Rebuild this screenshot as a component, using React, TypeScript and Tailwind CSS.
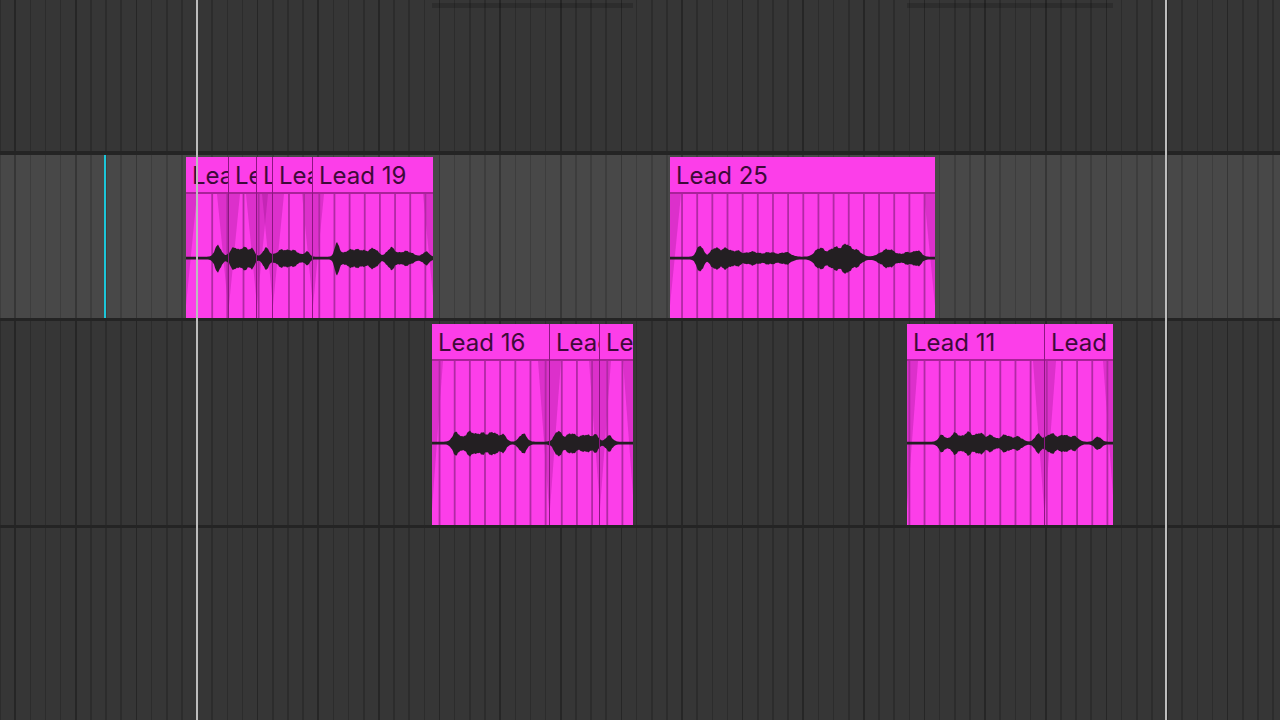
import React from "react";

// one sixteenth on the arrangement grid: 64 of them between the two loop markers
const GRID = 970 / 64;

type Bump = [number, number, number]; // centre x, half-height, spread

type Clip = { name: string; left: number; right: number; joined?: boolean };

type Lane = {
  clips: Clip[];
  bodyH: number;
  cy: number;
  waves: { from: number; to: number; bumps: Bump[]; seed: number }[];
};

const laneTwo: Lane = {
  bodyH: 124,
  cy: 64,
  clips: [
    { name: "Lead 21", left: 186, right: 228 },
    { name: "Lead 22", left: 228, right: 256, joined: true },
    { name: "Lead 23", left: 256, right: 272, joined: true },
    { name: "Lead 24", left: 272, right: 312, joined: true },
    { name: "Lead 19", left: 312, right: 433, joined: true },
    { name: "Lead 25", left: 670, right: 935 },
  ],
  waves: [
    {
      from: 186,
      to: 433,
      seed: 1.3,
      bumps: [
        [218, 9, 4.5], [233, 7.5, 5], [243, 7.5, 5], [251, 6, 4],
        [265, 7, 4.5], [280, 5, 7], [292, 5, 8], [306, 4, 3.5],
        [336, 10.5, 3.5], [348, 4.5, 8], [360, 5, 9], [373, 6, 6],
        [390, 7, 5.5], [405, 4.5, 9], [425, 4, 4.5],
      ],
    },
    {
      from: 670,
      to: 935,
      seed: 2.7,
      bumps: [
        [700, 9, 4.5], [715, 7, 6], [726, 6.5, 6], [737, 4.5, 6], [752, 4, 9],
        [770, 3.5, 9], [786, 3.5, 7], [820, 7, 7], [835, 7.5, 7], [846, 9, 5.5],
        [856, 5.5, 7], [888, 6, 10], [908, 3.5, 7], [918, 4.5, 5],
      ],
    },
  ],
};

const laneThree: Lane = {
  bodyH: 164,
  cy: 82,
  clips: [
    { name: "Lead 16", left: 432, right: 549 },
    { name: "Lead 17", left: 549, right: 599, joined: true },
    { name: "Lead 18", left: 599, right: 633, joined: true },
    { name: "Lead 11", left: 907, right: 1044 },
    { name: "Lead 12", left: 1044, right: 1113, joined: true },
  ],
  waves: [
    {
      from: 432,
      to: 633,
      seed: 0.4,
      bumps: [
        [456, 7.5, 5], [470, 8, 7], [482, 6.5, 6], [493, 7.5, 6], [503, 5.5, 4.5],
        [523, 6.5, 5], [557, 8.5, 5], [570, 6.5, 7], [585, 5.5, 8], [595, 4.5, 4],
        [608, 5, 4.5],
      ],
    },
    {
      from: 907,
      to: 1113,
      seed: 3.1,
      bumps: [
        [942, 5.5, 4.5], [955, 7, 6], [968, 7.5, 6], [980, 7, 6], [991, 5, 5],
        [1005, 5.5, 7], [1018, 4, 6], [1038, 6, 4.5], [1050, 6.5, 6], [1063, 5.5, 7],
        [1074, 4, 5], [1097, 4, 4.5],
      ],
    },
  ],
};

function wavePath(from: number, to: number, cy: number, bumps: Bump[], seed: number) {
  const top: string[] = [];
  const bot: string[] = [];
  for (let x = from; x <= to; x += 1) {
    let a = 0;
    for (const [c, amp, w] of bumps) a += amp * Math.exp(-(((x - c) / w) ** 2));
    a = 1.3 + a * 1.25;
    const n = Math.sin(x * 0.9 + seed) * 0.5 + Math.sin(x * 2.3 + seed * 2) * 0.35;
    const t = a + (a > 3 ? n * Math.min(1.5, a * 0.15) : 0);
    top.push(`${x},${(cy - t).toFixed(1)}`);
    bot.push(`${x},${(cy + t * 1.1).toFixed(1)}`);
  }
  return `M${top.join("L")}L${bot.reverse().join("L")}Z`;
}

function ClipBox({ clip, lane }: { clip: Clip; lane: Lane }) {
  const w = clip.right - clip.left;
  const h = lane.bodyH;
  const lines: number[] = [];
  for (let k = Math.ceil(clip.left / GRID); k * GRID < clip.right; k++) {
    const x = k * GRID;
    if (x - clip.left > 1.5) lines.push(x);
  }

  return (
    <div
      className={`absolute top-0 bottom-0 flex flex-col overflow-hidden bg-[#fc3ee9] ${
        clip.joined ? "border-l border-[#8c1682]" : ""
      }`}
      style={{ left: clip.left, width: w }}
    >
      <div className="h-[37px] shrink-0 border-b-2 border-[#a92299] pl-[6px] pt-[3px] flex items-center overflow-hidden">
        <span className="min-w-0 overflow-hidden whitespace-nowrap text-[24px] leading-none tracking-[0px] text-[#3e0a39] font-['Inter',sans-serif]">
          {clip.name}
        </span>
      </div>
      <svg
        className="flex-1 block"
        width={w}
        height={h}
        viewBox={`${clip.left} 0 ${w} ${h}`}
        preserveAspectRatio="none"
      >
        <polygon
          points={`${clip.left},0 ${clip.left + 11},0 ${clip.left},${h * 0.9}`}
          fill="#8a0f7d"
          opacity="0.28"
        />
        <polygon
          points={`${clip.right},0 ${clip.right - 11},0 ${clip.right},${h * 0.9}`}
          fill="#8a0f7d"
          opacity="0.28"
        />
        {lines.map((x) => (
          <line key={x} x1={x} x2={x} y1={0} y2={h} stroke="#b02aa4" strokeWidth="1.8" />
        ))}
        {lane.waves.map((wv, i) => (
          <path key={i} d={wavePath(wv.from, wv.to, lane.cy, wv.bumps, wv.seed)} fill="#231f22" />
        ))}
      </svg>
    </div>
  );
}

const darkGrid =
  "bg-[#363636] bg-[image:repeating-linear-gradient(90deg,transparent_0px,transparent_14.3px,#262626_14.3px,#262626_16px,transparent_16px,transparent_60.625px),repeating-linear-gradient(90deg,#2c2c2c_0px,#2c2c2c_0.8px,transparent_0.8px,transparent_14.356px,#2c2c2c_14.356px,#2c2c2c_15.156px)]";

const lightGrid =
  "bg-[#484848] bg-[image:repeating-linear-gradient(90deg,transparent_0px,transparent_14.3px,#363636_14.3px,#363636_16px,transparent_16px,transparent_60.625px),repeating-linear-gradient(90deg,#3d3d3d_0px,#3d3d3d_0.8px,transparent_0.8px,transparent_14.356px,#3d3d3d_14.356px,#3d3d3d_15.156px)]";

export default function App() {
  return (
    <div className="relative w-[1280px] h-[720px] overflow-hidden bg-[#242424] flex flex-col">
      {/* empty track above */}
      <div className={`relative h-[155px] shrink-0 border-b-4 border-[#242424] ${darkGrid}`}>
        <div className="absolute top-[3px] h-[5px] left-[432px] w-[201px] bg-black/15" />
        <div className="absolute top-[3px] h-[5px] left-[907px] w-[206px] bg-black/15" />
      </div>

      {/* selected lead track */}
      <div className={`relative h-[166px] shrink-0 pt-[2px] flex flex-col border-b-[3px] border-[#242424] ${lightGrid}`}>
        <div className="absolute left-[104px] w-[2px] top-0 bottom-0 bg-[#1cc6d9]" />
        <div className="relative flex-1">
          {laneTwo.clips.map((c) => (
            <ClipBox key={c.name} clip={c} lane={laneTwo} />
          ))}
        </div>
      </div>

      {/* second lead track */}
      <div className={`relative h-[207px] shrink-0 pt-[3px] flex flex-col border-b-[3px] border-[#242424] ${darkGrid}`}>
        <div className="relative flex-1">
          {laneThree.clips.map((c) => (
            <ClipBox key={c.name} clip={c} lane={laneThree} />
          ))}
        </div>
      </div>

      <div className={`flex-1 ${darkGrid}`} />

      {/* loop markers */}
      <div className="absolute top-0 bottom-0 left-[196px] w-[2px] bg-[#bdbdbd]" />
      <div className="absolute top-0 bottom-0 left-[1165px] w-[2px] bg-[#bdbdbd]" />
    </div>
  );
}
